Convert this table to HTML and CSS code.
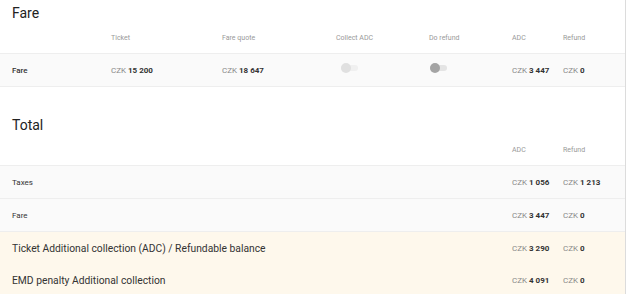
FILE: index.html
```html
<!DOCTYPE html>
<html>
<head>
<meta charset="utf-8">
<link rel="stylesheet" href="styles.css">
</head>
<body>
<div class="page">
  <section class="section">
    <h2 class="title">Fare</h2>
    <div class="grid head">
      <span></span>
      <span>Ticket</span>
      <span>Fare quote</span>
      <span>Collect ADC</span>
      <span>Do refund</span>
      <span>ADC</span>
      <span>Refund</span>
    </div>
    <div class="grid row gray">
      <span class="name">Fare</span>
      <span class="val"><i>CZK</i> <b>15 200</b></span>
      <span class="val"><i>CZK</i> <b>18 647</b></span>
      <span><span class="toggle off collect"><span class="thumb"></span></span></span>
      <span><span class="toggle dark refund"><span class="thumb"></span></span></span>
      <span class="val"><i>CZK</i> <b>3 447</b></span>
      <span class="val"><i>CZK</i> <b>0</b></span>
    </div>
  </section>
  <section class="section total">
    <h2 class="title">Total</h2>
    <div class="grid head">
      <span class="wide"></span>
      <span>ADC</span>
      <span>Refund</span>
    </div>
    <div class="grid row gray">
      <span class="name wide light">Taxes</span>
      <span class="val"><i>CZK</i> <b>1 056</b></span>
      <span class="val"><i>CZK</i> <b>1 213</b></span>
    </div>
    <div class="grid row gray">
      <span class="name wide light">Fare</span>
      <span class="val"><i>CZK</i> <b>3 447</b></span>
      <span class="val"><i>CZK</i> <b>0</b></span>
    </div>
    <div class="grid row yellow">
      <span class="big wide">Ticket Additional collection (ADC) / Refundable balance</span>
      <span class="val"><i>CZK</i> <b>3 290</b></span>
      <span class="val"><i>CZK</i> <b>0</b></span>
    </div>
    <div class="grid row yellow">
      <span class="big wide">EMD penalty Additional collection</span>
      <span class="val"><i>CZK</i> <b>4 091</b></span>
      <span class="val"><i>CZK</i> <b>0</b></span>
    </div>
  </section>
</div>
</body>
</html>
```
FILE: styles.css
```css
html, body {
  margin: 0;
  padding: 0;
  background: #fff;
  font-family: Roboto, "Noto Sans", sans-serif;
  color: #333;
}
.page {
  width: 625px;
  min-height: 294px;
  border-right: 1px solid #dcdcdc;
}
.section {
  display: flex;
  flex-direction: column;
}
.total {
  margin-top: 25px;
}
.title {
  margin: 0;
  height: 22px;
  padding: 4px 0 0 12px;
  box-sizing: border-box;
  font-size: 14px;
  line-height: 18px;
  font-weight: 400;
  color: #222;
}
.grid {
  display: grid;
  grid-template-columns: 99px 111px 114px 93px 83px 51px 1fr;
  align-items: center;
  padding-left: 12px;
}
.total .grid {
  grid-template-columns: 500px 51px 1fr;
}
.head {
  height: 31px;
  border-bottom: 1px solid #eeeeee;
  font-size: 7px;
  color: #999;
}
.row {
  height: 32px;
  border-bottom: 1px solid #eeeeee;
  font-size: 8px;
}
.gray {
  background: #fafafa;
}
.yellow {
  background: #fef8ec;
  border-bottom: none;
}
.name {
  font-weight: 500;
  color: #333;
}
.name.light {
  font-weight: 400;
}
.big {
  font-size: 10.3px;
  color: #333;
}
.val i {
  font-style: normal;
  color: #888;
}
.val b {
  font-weight: 700;
  color: #333;
}
.toggle {
  display: flex;
  align-items: center;
  width: 17px;
  height: 6px;
  border-radius: 3px;
  position: relative;
  top: -2px;
}
.toggle .thumb {
  width: 10px;
  height: 10px;
  border-radius: 50%;
}
.collect {
  margin-left: 5px;
}
.refund {
  margin-left: 1px;
}
.off {
  background: #f0f0f0;
}
.off .thumb {
  background: #e0e0e0;
}
.dark {
  background: #e4e4e4;
}
.dark .thumb {
  background: #a4a4a4;
}
```
